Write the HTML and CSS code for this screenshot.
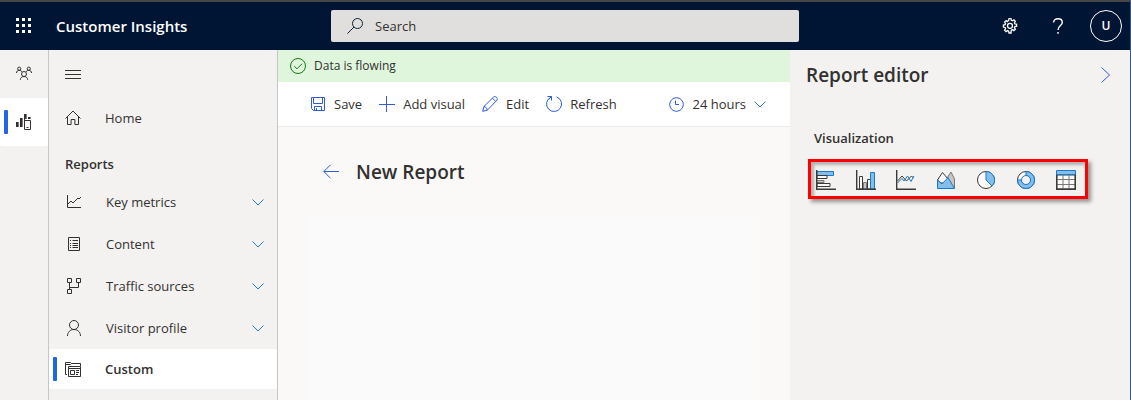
FILE: index.html
```html
<!DOCTYPE html>
<html lang="en">
<head>
<meta charset="utf-8">
<meta name="viewport" content="width=device-width, initial-scale=1">
<title>Customer Insights</title>
<link rel="stylesheet" href="styles.css">
</head>
<body>
<div class="app">
  <header class="topbar">
    <div class="brand">
      <button class="icon-btn" aria-label="App launcher"><svg class="icon" viewBox="0 0 16 16"><path fill="currentColor" d="M0 0h3v3H0zM6 0h3v3H6zM12 0h3v3h-3zM0 6h3v3H0zM6 6h3v3H6zM12 6h3v3h-3zM0 12h3v3H0zM6 12h3v3H6zM12 12h3v3h-3z"/></svg></button>
      <span class="brand-name">Customer Insights</span>
    </div>
    <label class="search">
      <svg class="icon" viewBox="0 0 16 16"><circle cx="10.500" cy="5.500" r="5"/><path d="M7 9L.4 15.600"/></svg>
      <input type="text" placeholder="Search" aria-label="Search">
    </label>
    <div class="top-actions">
      <button class="icon-btn" aria-label="Settings"><svg class="icon" viewBox="0 0 16 16" stroke-width="1.300"><path d="M6.700 2.300L7 .6h2l.3 1.700 1.200.5 1.400-1 1.500 1.500-1 1.400.5 1.200 1.700.3v2l-1.700.3-.5 1.200 1 1.400-1.500 1.500-1.400-1-1.200.5L9 15H7l-.3-1.900-1.200-.5-1.400 1-1.500-1.500 1-1.400-.5-1.200L1.400 9V7l1.700-.3.5-1.200-1-1.400 1.500-1.500 1.400 1z"/><circle cx="8" cy="7.800" r="2.500"/></svg></button>
      <button class="icon-btn" aria-label="Help"><svg class="icon" viewBox="0 0 16 16" stroke-width="1.400"><path d="M3.600 4.600C3.600 2 5.400.7 8 .7s4.300 1.400 4.300 3.700C12.300 7.600 8 7.500 8 12M8 14v1.700"/></svg></button>
      <button class="avatar" aria-label="Account">U</button>
    </div>
  </header>

  <nav class="rail" aria-label="Areas">
    <button class="rail-item" aria-label="Audience"><svg class="icon" viewBox="0 0 16 16"><circle cx="8" cy="8" r="2.500"/><path d="M4.300 13.800c0-2 1.600-3.300 3.700-3.300s3.700 1.300 3.700 3.300M.5 7c0-1.700 1.100-2.700 2.700-2.700S5.600 5 6 6M15.500 7c0-1.700-1.100-2.700-2.700-2.700S10.400 5 10 6"/><circle cx="3.200" cy="2.700" r="1.600"/><circle cx="12.800" cy="2.700" r="1.600"/></svg></button>
    <button class="rail-item active" aria-label="Reports"><svg class="icon" viewBox="0 0 16 16"><path fill="currentColor" stroke="none" d="M0 8h2.600v5H0zM4 4h2.600v9H4zM8 0h2.600v5H9v6H8zM12 3h2.600v2H12z"/><path d="M8.500 6.500h6v9h-6zM10.500 13.500h2"/></svg></button>
  </nav>

  <nav class="sidebar" aria-label="Reports navigation">
    <button class="nav-toggle" aria-label="Toggle navigation"><svg class="icon" viewBox="0 0 16 16"><path d="M0 4.500h16M0 8.500h16M0 12.500h16"/></svg></button>
    <a class="nav-link home" href="#"><svg class="icon" viewBox="0 0 16 16"><path d="M.5 8.500L8 1l7.500 7.500M2.500 6.700v7.800h3.600V9.500h3.800v5h3.600V6.700"/></svg>Home</a>
    <h2 class="nav-heading">Reports</h2>
    <button class="nav-link"><svg class="icon" viewBox="0 0 16 16"><path d="M1.500 1v12.500H15"/><path d="M2 10l3-3 2 2 5-5 1 1 2-2"/></svg><span>Key metrics</span><svg class="chevron" viewBox="0 0 12 7"><path d="M.5.500L6 6 11.500.500"/></svg></button>
    <button class="nav-link"><svg class="icon" viewBox="0 0 16 16"><path d="M2.500 1.500h11v13h-11zM6.500 4.500H12M6.500 7.500H12M6.500 9.500H12M6.500 11.500H12M4 4.500h1M4 7.500h1M4 9.500h1M4 11.500h1"/></svg><span>Content</span><svg class="chevron" viewBox="0 0 12 7"><path d="M.5.500L6 6 11.500.500"/></svg></button>
    <button class="nav-link"><svg class="icon" viewBox="0 0 16 16"><path d="M1.500 .500h4v4h-4zM10.500 .500h4v4h-4zM1.500 11.500h4v4h-4zM3.500 4.500v7M3.500 9.500h9v-5"/></svg><span>Traffic sources</span><svg class="chevron" viewBox="0 0 12 7"><path d="M.5.500L6 6 11.500.500"/></svg></button>
    <button class="nav-link"><svg class="icon" viewBox="0 0 16 16"><circle cx="8" cy="5" r="4.500"/><path d="M1.500 16c0-3.700 2.700-6.500 6.500-6.500s6.500 2.800 6.500 6.500"/></svg><span>Visitor profile</span><svg class="chevron" viewBox="0 0 12 7"><path d="M.5.500L6 6 11.500.500"/></svg></button>
    <a class="nav-link custom" href="#" aria-current="page"><svg class="icon" viewBox="0 0 16 16"><path d="M2 13.500H.5v-12h5l1 1h9V5M.5 3.500h5l1-1M3.500 5.500h12v10h-12zM3.500 7.500h12M5.500 9.500h4v4h-4zM11 9.500h3M11 11.500h3M11 13.500h2"/></svg>Custom</a>
  </nav>

  <main class="main">
    <div class="status" role="status"><svg class="icon" viewBox="0 0 16 16"><circle cx="8" cy="8" r="7.500"/><path d="M4.300 8.200L7 10.800l5-5"/></svg>Data is flowing</div>
    <div class="toolbar">
      <button class="tool"><svg class="icon" viewBox="0 0 16 16"><path d="M1.500 1.500h13v13H3.500l-2-2zM3.500 1.500v6h9v-6M4.500 14.500v-4h7v4M6.500 12v2.500"/></svg>Save</button>
      <button class="tool"><svg class="icon" viewBox="0 0 16 16"><path d="M0 8.500h16M7.500 0v16"/></svg>Add visual</button>
      <button class="tool"><svg class="icon" viewBox="0 0 16 16"><path d="M.7 15.300l1.200-4.800L11.800.9c1.800-1.200 4.400 1.300 3.200 3.200L5.300 14.200zM10.500 2.200l3.300 3.300M1.900 10.500c1.800.2 3.200 1.600 3.400 3.700"/></svg>Edit</button>
      <button class="tool"><svg class="icon" viewBox="0 0 16 16"><path d="M10.500.9A7.500 7.500 0 1 1 4.500 1.400M1.500.5h4v4M5.500.5L2.800 3.500"/></svg>Refresh</button>
      <button class="tool period" aria-haspopup="listbox"><svg class="icon" viewBox="0 0 16 16"><circle cx="8.500" cy="8.500" r="6.800"/><path d="M7.500 4.500v4H11"/></svg>24 hours<svg class="chevron" viewBox="0 0 12 7"><path d="M.5.500L6 6 11.500.500"/></svg></button>
    </div>
    <div class="report-head">
      <button class="back" aria-label="Back"><svg class="icon" viewBox="0 0 16 16"><path d="M7.500.800L.8 7.500l6.700 6.700M.8 7.500H16"/></svg></button>
      <h1>New Report</h1>
    </div>
    <section class="canvas" aria-label="Report canvas"></section>
  </main>

  <aside class="editor">
    <div class="editor-head">
      <h2>Report editor</h2>
      <button class="collapse" aria-label="Collapse editor"><svg class="icon" viewBox="0 0 16 16"><path d="M3.500.500L11.500 8l-8 7.500"/></svg></button>
    </div>
    <h3>Visualization</h3>
    <div class="visuals">
      <button aria-label="Bar chart"><svg class="viz" viewBox="0 0 20 20"><path class="blue" d="M1 1.500h16.500v4H1z"/><path class="white" d="M1 5.500h10v3H1zM1 13.500h13v3H1z"/><path class="gray" d="M1 10.500h7v2H1z"/><path class="axis" d="M.7 0v19.300H20"/></svg></button>
      <button aria-label="Column chart"><svg class="viz" viewBox="0 0 20 20"><path class="white" d="M3.500 6.500h3V19h-3zM11.500 9.500h3V19h-3z"/><path class="gray" d="M7.500 12.500h3V19h-3z"/><path class="blue" d="M14.500 2.500h4V19h-4z"/><path class="axis" d="M.7 0v19.300H20"/></svg></button>
      <button aria-label="Line chart"><svg class="viz" viewBox="0 0 20 20"><path class="line-dark" d="M1.500 11L6 6l4.500 5 5-5 2 2"/><path class="line-blue" d="M1.500 13L6 8.500 8 11l3.500-5 3.500 5.500L18 6"/><path class="axis" d="M.7 0v19.300H20"/></svg></button>
      <button aria-label="Area chart"><svg class="viz" viewBox="0 0 20 20"><path class="gray" d="M11 8l4-6 3.500 7v9H11z"/><path class="white" d="M1.500 10l5-7.500L12 9v4H5z"/><path class="blue" d="M1.500 18.500V10L6 14l6-6.500 6.500 11z"/></svg></button>
      <button aria-label="Pie chart"><svg class="viz" viewBox="0 0 20 20"><circle class="white" cx="10" cy="10" r="8.500"/><path class="blue" d="M10 1.500V10l6 6a8.500 8.500 0 0 0-6-14.500z"/></svg></button>
      <button aria-label="Donut chart"><svg class="viz" viewBox="0 0 20 20"><circle class="white" cx="10" cy="10" r="8.500"/><path class="blue" d="M10 1.500a8.500 8.500 0 1 1-8.500 8.500H5.500A4.500 4.500 0 1 0 10 5.500z"/><circle class="hole" cx="10" cy="10" r="4.500"/></svg></button>
      <button aria-label="Table"><svg class="viz" viewBox="0 0 20 20"><path class="white" d="M.8 5H19.200v14H.8z"/><path class="grid" d="M7 5v14M13 5v14M1 9.500h18M1 14.500h18"/><path class="axis" d="M.7 4v15.300h18.600V4"/><path class="blue" d="M.5.500h19v4H.5z"/></svg></button>
    </div>
  </aside>
</div>
</body>
</html>
```
FILE: styles.css
```css
* {
  box-sizing: border-box;
}

body {
  margin: 0;
  color: #323130;
  font: 13px/20px "Open Sans", "Noto Sans", sans-serif;
}

h1, h2, h3 {
  margin: 0;
  font-weight: 600;
}

button, input {
  padding: 0;
  border: 0;
  background: none;
  color: inherit;
  font: inherit;
}

button {
  cursor: pointer;
}

a {
  color: inherit;
  text-decoration: none;
}

svg {
  display: block;
  flex: none;
  fill: none;
  stroke: currentColor;
}

.icon {
  width: 16px;
  height: 16px;
}

.chevron {
  width: 12px;
  height: 7px;
  color: #2b7bbf;
}

.app {
  display: grid;
  grid-template: auto 1fr / 49px 229px minmax(0, 1fr) 340px;
  min-height: 100vh;
  border-right: 1px solid #2a5a9c;
  background: #f3f2f1;
}

/* Top bar */
.topbar {
  grid-column: 1 / -1;
  display: grid;
  grid-template-columns: 331px minmax(0, 468px) 1fr;
  align-items: center;
  height: 50px;
  border-top: 2px solid #484644;
  background: #001433;
  color: #fff;
}

.brand {
  display: flex;
  align-items: center;
  gap: 24px;
  padding-left: 16px;
}

.brand .icon {
  stroke: none;
}

.brand-name {
  font-size: 15px;
  font-weight: 600;
}

.search {
  display: flex;
  align-items: center;
  gap: 12px;
  height: 32px;
  padding: 0 16px;
  border-radius: 2px;
  background: #e1dfdd;
  color: #0b1f3f;
}

.search input {
  flex: 1;
  min-width: 0;
  outline: none;
}

.search input::placeholder {
  color: #323130;
  opacity: 1;
}

.top-actions {
  display: flex;
  align-items: center;
  justify-content: flex-end;
  gap: 32px;
  padding-right: 8px;
}

.avatar {
  width: 32px;
  height: 32px;
  margin-left: -8px;
  border: 1px solid #fff;
  border-radius: 50%;
  font-size: 12px;
  font-weight: 600;
}

/* Area rail */
.rail {
  border-right: 1px solid #c8c6c4;
}

.rail-item {
  display: grid;
  place-items: center;
  width: 100%;
  height: 48px;
}

.rail-item.active {
  grid-template-columns: 4px 1fr;
  padding: 0 12px 0 4px;
  border-radius: 2px;
  background: #fff;
}

.rail-item.active::before,
.custom::before {
  content: "";
  width: 4px;
  height: 24px;
  border-radius: 1px;
  background: #2266e3;
}

.rail-item.active .icon {
  margin-left: 4px;
}

/* Sidebar */
.sidebar {
  display: flex;
  flex-direction: column;
  border-right: 1px solid #c8c6c4;
}

.nav-toggle {
  display: flex;
  align-items: center;
  height: 48px;
  padding-left: 16px;
}

.nav-link {
  display: flex;
  align-items: center;
  gap: 24px;
  height: 42px;
  padding: 0 13px 0 17px;
  text-align: left;
}

.nav-link .chevron {
  margin-left: auto;
}

.home,
.custom {
  height: 40px;
  padding-left: 16px;
}

.custom {
  padding-left: 4px;
  border-radius: 2px;
  background: #fff;
  font-weight: 600;
}

.custom::before {
  margin-right: -16px;
}

.nav-heading {
  padding: 9px 16px 0;
  font-size: 13px;
  line-height: 34px;
}

/* Main area */
.main {
  display: flex;
  flex-direction: column;
  background: #faf9f8;
}

.status {
  display: flex;
  align-items: center;
  gap: 8px;
  height: 32px;
  padding: 0 12px;
  background: #dff6dd;
  font-size: 12px;
}

.status .icon {
  color: #107c10;
}

.toolbar {
  display: flex;
  align-items: center;
  gap: 17px;
  height: 45px;
  padding: 0 24px 0 32px;
  border-bottom: 1px solid #edebe9;
  background: #fff;
}

.tool {
  display: flex;
  align-items: center;
  gap: 8px;
  white-space: nowrap;
}

.tool .icon,
.back,
.collapse {
  color: #2f5bd8;
}

.period {
  margin-left: auto;
}

.report-head {
  display: flex;
  align-items: center;
  gap: 17px;
  padding: 33px 45px 0;
}

.report-head h1 {
  font-size: 19px;
  line-height: 24px;
}

.canvas {
  flex: 1;
  margin: 32px 31px 0;
  background: #fafafa;
}

/* Report editor */
.editor-head {
  display: flex;
  align-items: center;
  justify-content: space-between;
  height: 50px;
  padding: 0 16px;
}

.editor-head h2 {
  font-size: 19px;
}

.editor h3 {
  padding: 28px 24px 11px;
  font-size: 13px;
}

.visuals {
  display: flex;
  align-items: center;
  gap: 20px;
  width: fit-content;
  height: 40px;
  margin-left: 18px;
  padding: 2px 9px 0 5px;
  border: 3px solid #f00;
  box-shadow: 3px 3px 4px #0006, inset 3px 3px 3px #0004;
}

.viz {
  width: 20px;
  height: 20px;
}

.blue {
  fill: #83beec;
  stroke: #1979ca;
}

.white {
  fill: #fafafa;
  stroke: #3a3a38;
}

.gray {
  fill: #c8c6c4;
  stroke: #797774;
}

.hole {
  fill: #f3f2f1;
  stroke: #1979ca;
}

.axis {
  stroke: #3a3a38;
  stroke-width: 1.4;
}

.grid {
  stroke: #797774;
}

.line-dark {
  stroke: #3a3a38;
}

.line-blue {
  stroke: #1979ca;
}
```
